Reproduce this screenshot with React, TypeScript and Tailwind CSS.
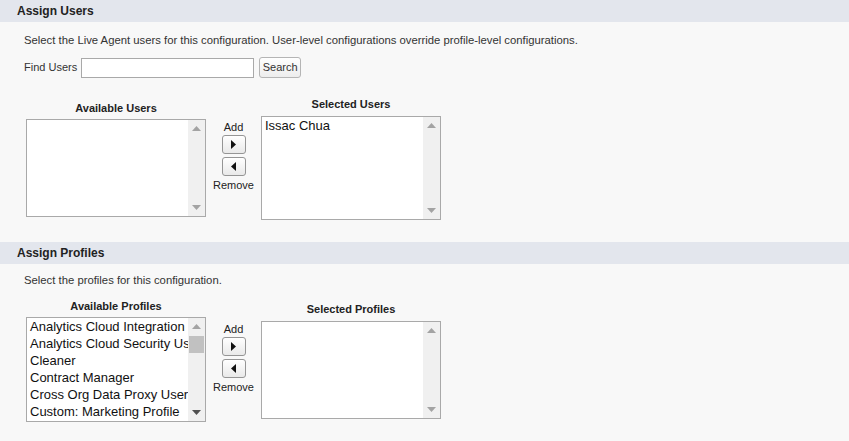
import React from 'react';

const profiles = [
  'Analytics Cloud Integration User',
  'Analytics Cloud Security User',
  'Cleaner',
  'Contract Manager',
  'Cross Org Data Proxy User',
  'Custom: Marketing Profile',
];

const Arrow = ({ dir, color }: { dir: 'up' | 'down'; color: string }) => (
  <svg width="9" height="5" viewBox="0 0 9 5">
    {dir === 'up' ? <path d="M4.5 0 L9 5 L0 5 Z" fill={color} /> : <path d="M0 0 L9 0 L4.5 5 Z" fill={color} />}
  </svg>
);

// fake listbox with a windows-style scrollbar
const ListBox = ({
  height,
  items,
  thumb = false,
}: {
  height: number;
  items: string[];
  thumb?: boolean;
}) => (
  <div className="flex w-[180px] border border-[#a9a9a9] bg-white" style={{ height }}>
    <div className="flex-1 overflow-hidden whitespace-nowrap pl-[3px] text-[13px] leading-[17px] text-[#111]">
      {items.map((it) => (
        <div key={it}>{it}</div>
      ))}
    </div>
    <div className="relative flex w-[17px] flex-col items-center justify-between bg-[#f0f0f0] py-[6px]">
      <Arrow dir="up" color="#a3a3a3" />
      {thumb && <div className="absolute left-[1px] top-[18px] h-[17px] w-[15px] bg-[#c1c1c1]" />}
      <Arrow dir="down" color={thumb ? '#505050' : '#a3a3a3'} />
    </div>
  </div>
);

const MoveButton = ({ dir }: { dir: 'right' | 'left' }) => (
  <button className="flex h-[19px] w-[24px] items-center justify-center rounded-[3px] border border-[#959595] bg-gradient-to-b from-white to-[#e9e9e9]">
    <svg width="5" height="9" viewBox="0 0 5 9">
      {dir === 'right' ? <path d="M0 0 L5 4.5 L0 9 Z" fill="#111" /> : <path d="M5 0 L0 4.5 L5 9 Z" fill="#111" />}
    </svg>
  </button>
);

const Duel = ({
  leftLabel,
  rightLabel,
  leftH,
  rightH,
  leftItems,
  rightItems,
  thumb,
}: {
  leftLabel: string;
  rightLabel: string;
  leftH: number;
  rightH: number;
  leftItems: string[];
  rightItems: string[];
  thumb?: boolean;
}) => (
  <div className="flex items-center pl-[26px]">
    <div className="flex flex-col items-center">
      <div className="mb-[5px] text-[11px] font-bold leading-[12px] text-[#222]">{leftLabel}</div>
      <ListBox height={leftH} items={leftItems} thumb={thumb} />
    </div>
    <div className="mb-[6px] flex w-[55px] flex-col items-center text-[11px] leading-[12px] text-[#222]">
      <div className="mb-[2px]">Add</div>
      <MoveButton dir="right" />
      <div className="h-[3px]" />
      <MoveButton dir="left" />
      <div className="mt-[3px]">Remove</div>
    </div>
    <div className="flex flex-col items-center">
      <div className="mb-[6px] text-[11px] font-bold leading-[12px] text-[#222]">{rightLabel}</div>
      <ListBox height={rightH} items={rightItems} />
    </div>
  </div>
);

const Header = ({ title }: { title: string }) => (
  <div className="flex h-[22px] items-center bg-[#e3e6ed] pl-[17px] text-[12px] font-bold text-[#222]">
    {title}
  </div>
);

export default function App() {
  return (
    <div className="min-h-[441px] bg-[#f8f8f8] font-['Liberation_Sans',Arial,sans-serif]">
      <Header title="Assign Users" />
      <p className="mt-[12px] pl-[24px] text-[11.3px] leading-[13px] text-[#333]">
        Select the Live Agent users for this configuration. User-level configurations override profile-level
        configurations.
      </p>
      <div className="mt-[10px] flex items-center pl-[24px] text-[11px] text-[#333]">
        <span>Find Users</span>
        <input className="ml-[4px] h-[20px] w-[173px] border border-[#a9a9a9] bg-white outline-none" />
        <button className="ml-[5px] h-[21px] w-[42px] rounded-[3px] border border-[#b5b5b5] bg-gradient-to-b from-white to-[#ededed] text-[11px] text-[#333]">
          Search
        </button>
      </div>
      <div className="mt-[20px]">
        <Duel
          leftLabel="Available Users"
          rightLabel="Selected Users"
          leftH={98}
          rightH={104}
          leftItems={[]}
          rightItems={['Issac Chua']}
        />
      </div>
      <div className="mt-[22px]">
        <Header title="Assign Profiles" />
      </div>
      <p className="mt-[10px] pl-[24px] text-[11.3px] leading-[13px] text-[#333]">
        Select the profiles for this configuration.
      </p>
      <div className="mt-[13px] pb-[20px]">
        <Duel
          leftLabel="Available Profiles"
          rightLabel="Selected Profiles"
          leftH={105}
          rightH={98}
          leftItems={profiles}
          rightItems={[]}
          thumb
        />
      </div>
    </div>
  );
}
